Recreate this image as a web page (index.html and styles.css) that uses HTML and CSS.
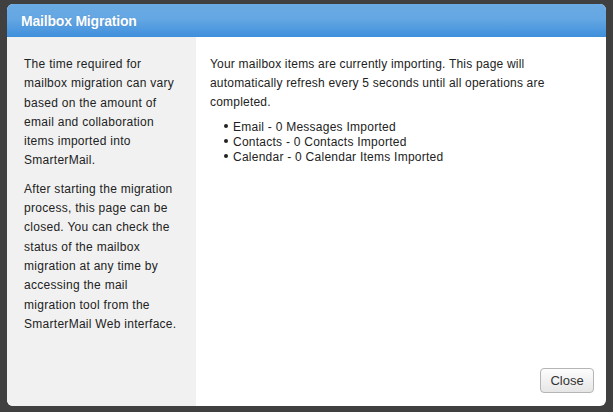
FILE: index.html
```html
<!DOCTYPE html>
<html lang="en">
<head>
<meta charset="UTF-8">
<title>Mailbox Migration</title>
<link rel="stylesheet" href="styles.css">
</head>
<body>

<div class="dialog">
  <!-- title bar -->
  <div class="dialog-header">Mailbox Migration</div>

  <div class="dialog-body">
    <!-- help text -->
    <div class="sidebar">
      <p>The time required for mailbox migration can vary based on the amount of email and collaboration items imported into SmarterMail.</p>
      <p>After starting the migration process, this page can be closed. You can check the status of the mailbox migration at any time by accessing the mail<br>migration tool from the SmarterMail Web interface.</p>
    </div>

    <!-- status -->
    <div class="content">
      <p>Your mailbox items are currently importing. This page will automatically refresh every 5 seconds until all operations are completed.</p>
      <ul class="status-list">
        <li>Email - 0 Messages Imported</li>
        <li>Contacts - 0 Contacts Imported</li>
        <li>Calendar - 0 Calendar Items Imported</li>
      </ul>
      <div class="buttons">
        <button class="btn">Close</button>
      </div>
    </div>
  </div>
</div>

</body>
</html>
```

FILE: styles.css
```css
/* page */
body {
  margin: 0;
  background-color: #404040;
  font-family: 'Liberation Sans', Arial, sans-serif;
  color: #222;
}

/* dialog box */
.dialog {
  width: 599px;
  height: 402px;
  margin: 4px 0 0 7px;
  display: flex;
  flex-direction: column;
  border-radius: 6px;
  overflow: hidden;
  background-color: #fff;
}

.dialog-header {
  height: 33px;
  box-sizing: border-box;
  padding: 9px 14px 0;
  background-image: linear-gradient(#6aaae4, #64a7e3 45%, #3f8fdc);
  color: #fff;
  font-size: 14px;
  font-weight: bold;
  letter-spacing: -0.2px;
  text-shadow: 0 0 1px rgba(0, 60, 140, 0.3);
}

.dialog-body {
  flex: 1;
  display: flex;
}

/* left help column */
.sidebar {
  width: 189px;
  box-sizing: border-box;
  padding: 18px 12px 0 17px;
  background-color: #f1f1f1;
  font-size: 12px;
  line-height: 19.3px;
  letter-spacing: 0.28px;
}

.sidebar p {
  margin: 0 0 9px;
}

/* right status column */
.content {
  flex: 1;
  display: flex;
  flex-direction: column;
  padding: 18px 12px 13px 14px;
  font-size: 12px;
  line-height: 19px;
  letter-spacing: 0.2px;
}

.content p {
  margin: 0;
  padding-right: 14px;
}

.status-list {
  margin: 8px 0 0;
  padding-left: 14px;
  list-style: none;
  line-height: 15px;
  letter-spacing: 0.25px;
}

.status-list li::before {
  content: '';
  display: inline-block;
  width: 4px;
  height: 4px;
  margin: 0 5px 0 0;
  border-radius: 50%;
  background-color: #222;
  vertical-align: 3px;
}

.buttons {
  margin-top: auto;
  display: flex;
  justify-content: flex-end;
}

.btn {
  width: 54px;
  height: 25px;
  padding: 0;
  font-family: 'Liberation Sans', Arial, sans-serif;
  font-size: 13px;
  color: #333;
  background-image: linear-gradient(#fdfdfd, #e6e6e6);
  border: 1px solid #b5b5b5;
  border-radius: 4px;
  cursor: pointer;
}
```
